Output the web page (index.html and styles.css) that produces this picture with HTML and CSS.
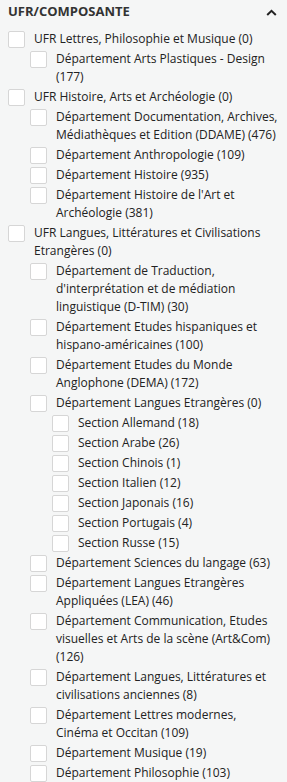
FILE: index.html
```html
<!DOCTYPE html>
<html lang="fr">
<head>
  <meta charset="UTF-8">
  <meta name="viewport" content="width=device-width, initial-scale=1">
  <title>Filtres</title>
  <link rel="stylesheet" href="styles.css">
</head>
<body>

  <div class="facet">
    <div class="facet-header">
      <h2>UFR/COMPOSANTE</h2>
      <svg class="chevron" width="11" height="7" viewBox="0 0 11 7">
        <path d="M1.2 6 L5.5 1.8 L9.8 6" fill="none" stroke="#222" stroke-width="2"/>
      </svg>
    </div>

    <ul class="tree">
      <li><label><span class="box"></span><span>UFR Lettres, Philosophie et Musique (0)</span></label>
        <ul>
          <li><label><span class="box"></span><span>Département Arts Plastiques - Design (177)</span></label></li>
        </ul>
      </li>
      <li><label><span class="box"></span><span>UFR Histoire, Arts et Archéologie (0)</span></label>
        <ul>
          <li><label><span class="box"></span><span>Département Documentation, Archives, Médiathèques et Edition (DDAME) (476)</span></label></li>
          <li><label><span class="box"></span><span>Département Anthropologie (109)</span></label></li>
          <li><label><span class="box"></span><span>Département Histoire (935)</span></label></li>
          <li><label><span class="box"></span><span>Département Histoire de l'Art et Archéologie (381)</span></label></li>
        </ul>
      </li>
      <li><label><span class="box"></span><span>UFR Langues, Littératures et Civilisations Etrangères (0)</span></label>
        <ul>
          <li><label><span class="box"></span><span>Département de Traduction, d'interprétation et de médiation linguistique (D-TIM) (30)</span></label></li>
          <li><label><span class="box"></span><span>Département Etudes hispaniques et hispano-américaines (100)</span></label></li>
          <li><label><span class="box"></span><span>Département Etudes du Monde Anglophone (DEMA) (172)</span></label></li>
          <li><label><span class="box"></span><span>Département Langues Etrangères (0)</span></label>
            <ul>
              <li><label><span class="box"></span><span>Section Allemand (18)</span></label></li>
              <li><label><span class="box"></span><span>Section Arabe (26)</span></label></li>
              <li><label><span class="box"></span><span>Section Chinois (1)</span></label></li>
              <li><label><span class="box"></span><span>Section Italien (12)</span></label></li>
              <li><label><span class="box"></span><span>Section Japonais (16)</span></label></li>
              <li><label><span class="box"></span><span>Section Portugais (4)</span></label></li>
              <li><label><span class="box"></span><span>Section Russe (15)</span></label></li>
            </ul>
          </li>
          <li><label><span class="box"></span><span>Département Sciences du langage (63)</span></label></li>
          <li><label><span class="box"></span><span>Département Langues Etrangères Appliquées (LEA) (46)</span></label></li>
          <li><label><span class="box"></span><span>Département Communication, Etudes visuelles et Arts de la scène (Art&amp;Com) (126)</span></label></li>
          <li><label><span class="box"></span><span>Département Langues, Littératures et civilisations anciennes (8)</span></label></li>
          <li><label><span class="box"></span><span>Département Lettres modernes, Cinéma et Occitan (109)</span></label></li>
          <li><label><span class="box"></span><span>Département Musique (19)</span></label></li>
          <li><label><span class="box"></span><span>Département Philosophie (103)</span></label></li>
        </ul>
      </li>
    </ul>
  </div>

</body>
</html>
```

FILE: styles.css
```css
body {
  margin: 0;
  background: #f5f6f6;
  font-family: 'Open Sans', Arial, sans-serif;
  color: #222;
}
.facet {
  padding: 0 8px 0 8px;
}
.facet-header {
  display: flex;
  justify-content: space-between;
  align-items: center;
  height: 21px;
  margin-bottom: 9px;
}
.facet-header h2 {
  margin: 0;
  font-size: 13px;
  font-weight: 700;
  color: #333;
}
.chevron {
  margin-right: 2px;
  margin-top: 3px;
}
.tree, .tree ul {
  list-style: none;
  margin: 0;
  padding: 0;
}
.tree ul {
  padding-left: 22px;
}
.tree li {
  margin: 0;
}
.tree label {
  display: flex;
  align-items: flex-start;
  gap: 9px;
  font-size: 12px;
  line-height: 18px;
  margin-bottom: 2px;
  cursor: pointer;
}
.box {
  flex: 0 0 auto;
  width: 15px;
  height: 15px;
  margin-top: 1px;
  background: #fff;
  border: 1px solid #d6d6d6;
  border-radius: 2px;
}
```
